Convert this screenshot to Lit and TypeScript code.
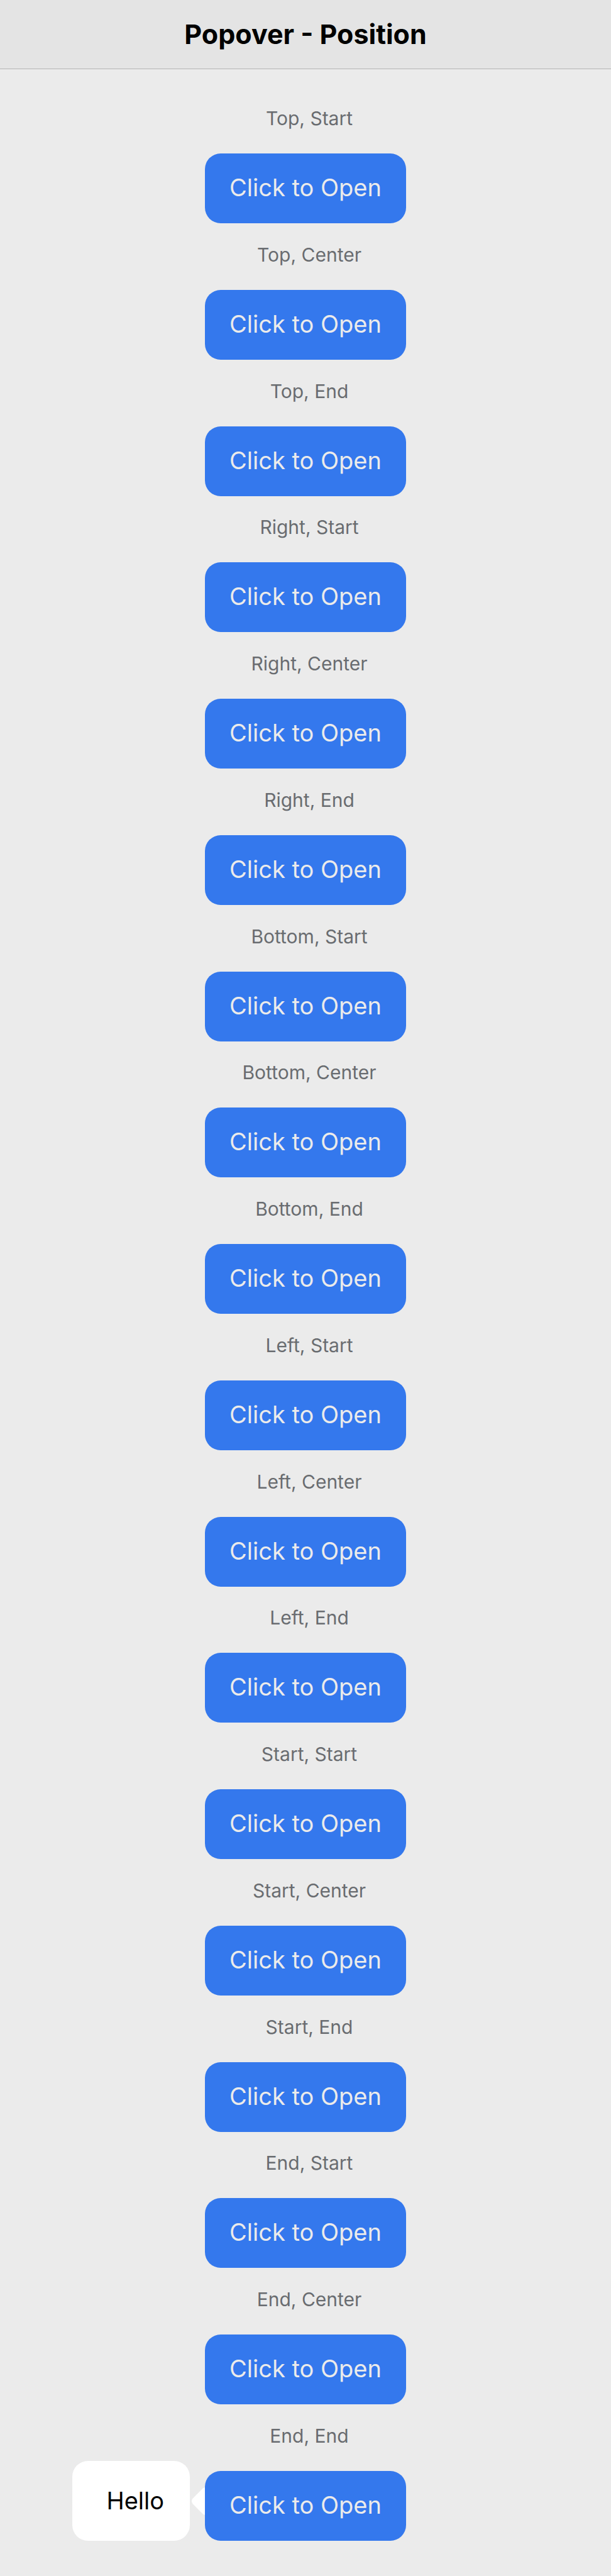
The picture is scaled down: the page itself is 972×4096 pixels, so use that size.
import { LitElement, html, css, nothing } from "lit";
import { customElement, property, state } from "lit/decorators.js";

const SIDES = ["Top", "Right", "Bottom", "Left", "Start", "End"];
const ALIGNMENTS = ["Start", "Center", "End"];
const POSITIONS = SIDES.flatMap((side) => ALIGNMENTS.map((align) => `${side}, ${align}`));

@customElement("popover-demo")
export class PopoverDemo extends LitElement {
  @property() label = "";
  @property({ type: Boolean }) open = false;

  static styles = css`
    :host {
      display: flex;
      flex-direction: column;
      align-items: center;
      gap: 36px;
    }
    .label {
      margin: 0;
      padding-left: 12px;
      font-size: 30px;
      line-height: 40px;
      font-weight: 400;
      color: #696c70;
    }
    .anchor {
      position: relative;
    }
    .trigger {
      position: relative;
      z-index: 1;
      display: block;
      padding: 30px 39px 33px;
      border: 0;
      border-radius: 25px;
      background: #3478ed;
      color: #ebebeb;
      font: inherit;
      font-size: 38px;
      line-height: 48px;
      cursor: pointer;
    }
    .popover {
      position: absolute;
      right: calc(100% + 24px);
      bottom: 0;
      padding: 39px 41px 40px 54px;
      border-radius: 25px;
      background: #fff;
      color: #000;
      font-size: 38px;
      line-height: 48px;
    }
    .arrow {
      position: absolute;
      left: calc(100% + 3px);
      top: 42px;
      width: 44px;
      height: 44px;
      fill: #fff;
    }
  `;

  private toggle() {
    this.dispatchEvent(new CustomEvent("toggle-popover"));
  }

  render() {
    return html`
      <h2 class="label" id="label">${this.label}</h2>
      <div class="anchor">
        <button
          class="trigger"
          type="button"
          aria-describedby="label"
          aria-expanded=${this.open ? "true" : "false"}
          @click=${this.toggle}
        >Click to Open</button>
        ${this.open
          ? html`<div class="popover" role="dialog" aria-labelledby="label">
              Hello
              <svg class="arrow" viewBox="0 0 44 44" aria-hidden="true">
                <path d="M1.8 17.5 L17.5 1.8 Q22 -1.8 26.5 1.8 L42.2 17.5 Q45.8 22 42.2 26.5 L26.5 42.2 Q22 45.8 17.5 42.2 L1.8 26.5 Q-1.8 22 1.8 17.5 Z" />
              </svg>
            </div>`
          : nothing}
      </div>
    `;
  }
}

@customElement("app-root")
export class AppRoot extends LitElement {
  @state() private openIndex = POSITIONS.length - 1;

  static styles = css`
    :host {
      display: flex;
      flex-direction: column;
      min-height: 100vh;
      background: #ebebeb;
      font-family: Inter, "Liberation Sans", sans-serif;
    }
    .toolbar {
      padding: 30px 24px 31px;
      border-bottom: 1px solid #b3b3b3;
      background: #e4e4e4;
      text-align: center;
    }
    .title {
      margin: 0;
      font-size: 43px;
      line-height: 48px;
      font-weight: 700;
      color: #000;
    }
    .content {
      flex: 1;
      display: flex;
      flex-direction: column;
      justify-content: space-between;
      padding: 58px 24px 56px;
    }
  `;

  private toggle(index: number) {
    this.openIndex = this.openIndex === index ? -1 : index;
  }

  render() {
    return html`
      <header class="toolbar"><h1 class="title">Popover - Position</h1></header>
      <main class="content">
        ${POSITIONS.map(
          (label, i) => html`<popover-demo
            .label=${label}
            .open=${i === this.openIndex}
            @toggle-popover=${() => this.toggle(i)}
          ></popover-demo>`
        )}
      </main>
    `;
  }
}
